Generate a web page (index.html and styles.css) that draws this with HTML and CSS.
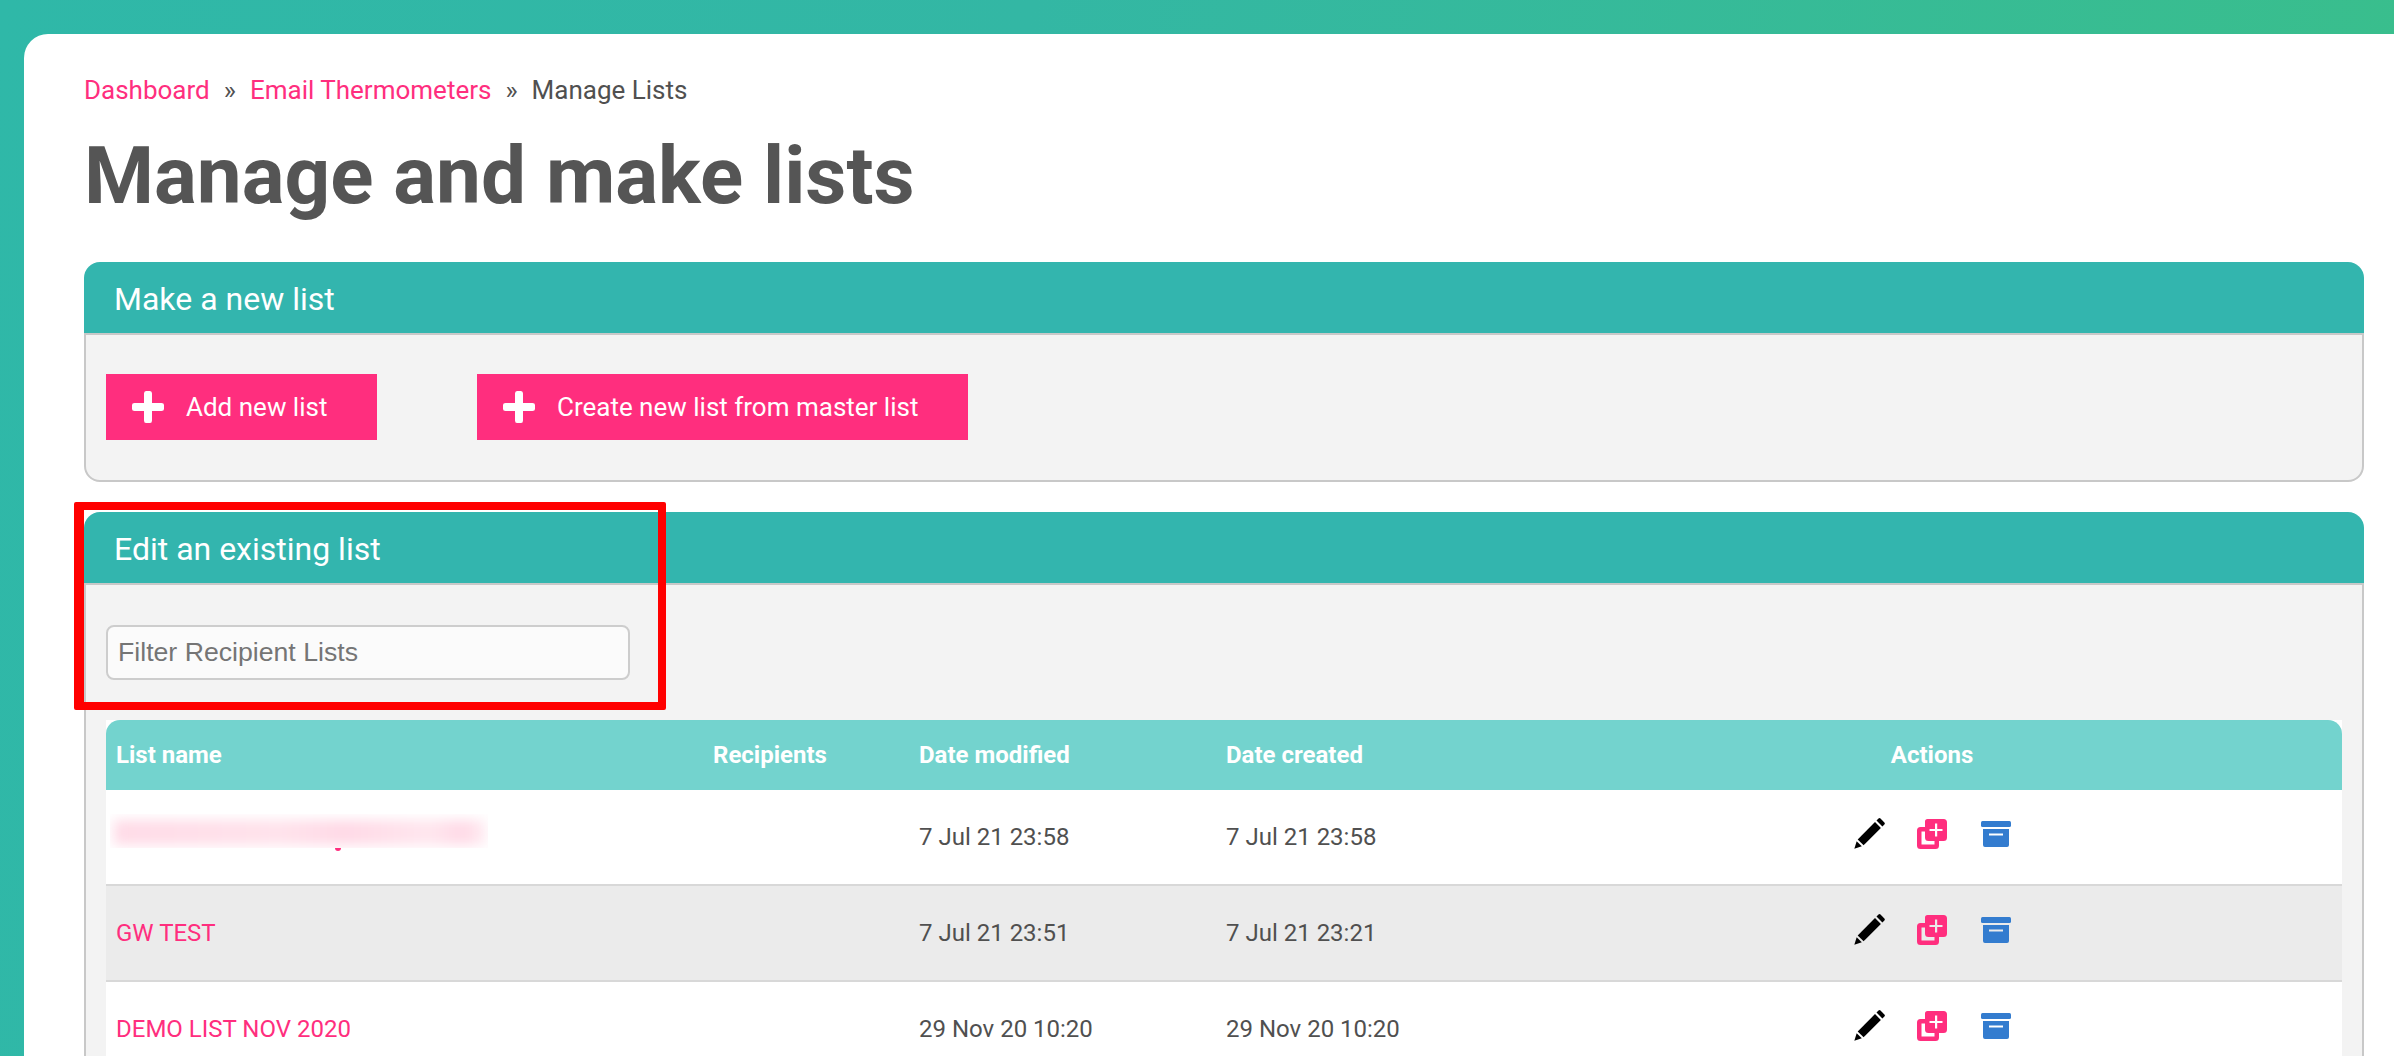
FILE: index.html
```html
<!DOCTYPE html>
<html lang="en">
<head>
<meta charset="utf-8">
<title>Manage and make lists</title>
<link rel="stylesheet" href="styles.css">
</head>
<body>
<svg class="defs" width="0" height="0" aria-hidden="true">
  <symbol id="i-pencil" viewBox="0 0 32 32">
    <path d="M24.5 1.6 Q25.5.6 26.5 1.6 L30.4 5.5 Q31.4 6.5 30.4 7.5 L28.4 9.5 L22.5 3.6Z"/>
    <path d="M21 5.1 L26.9 11 L9.6 28.3 L3.7 22.4Z"/>
    <path d="M2.7 24.2 L7.8 29.3 L.3 31.7Z"/>
  </symbol>
  <symbol id="i-dup" viewBox="0 0 30 30">
    <path fill-rule="evenodd" d="M10.500 0H26.500Q30 0 30 3.500V18.500Q30 22 26.500 22H11.500Q8 22 8 18.500V2.500Q8 0 10.500 0ZM18 4.500V9.900H12.500V12.100H18V17.500H20.200V12.100H25.500V9.900H20.200V4.500Z"/>
    <path d="M3.500 8H9V12.500H4.500V25.500H17.500V21H22V26.500Q22 30 18.500 30H3.500Q0 30 0 26.500V11.500Q0 8 3.500 8Z"/>
  </symbol>
  <symbol id="i-archive" viewBox="0 0 30 26">
    <rect x="0" y="0" width="30" height="6" rx="1.500"/>
    <path fill-rule="evenodd" d="M2 8H28V24Q28 26 26 26H4Q2 26 2 24ZM8 12.500V14.500H22V12.500Z"/>
  </symbol>
</svg>
<div class="card">
  <nav class="crumbs">
    <a href="#">Dashboard</a><span class="sep">»</span><a href="#">Email Thermometers</a><span class="sep">»</span><span>Manage Lists</span>
  </nav>
  <h1>Manage and make lists</h1>

  <section class="panel panel-make">
    <h2>Make a new list</h2>
    <div class="panel-body make-body">
      <a class="btn" href="#"><svg class="plus" viewBox="0 0 32 32"><path d="M12 2.500Q12 0 14 0H18Q20 0 20 2.500V12H29.500Q32 12 32 14V18Q32 20 29.500 20H20V29.500Q20 32 18 32H14Q12 32 12 29.500V20H2.500Q0 20 0 18V14Q0 12 2.500 12H12Z"/></svg>Add new list</a>
      <a class="btn" href="#"><svg class="plus" viewBox="0 0 32 32"><path d="M12 2.500Q12 0 14 0H18Q20 0 20 2.500V12H29.500Q32 12 32 14V18Q32 20 29.500 20H20V29.500Q20 32 18 32H14Q12 32 12 29.500V20H2.500Q0 20 0 18V14Q0 12 2.500 12H12Z"/></svg>Create new list from master list</a>
    </div>
  </section>

  <section class="panel panel-edit">
    <h2>Edit an existing list</h2>
    <div class="panel-body edit-body">
      <input class="filter" type="text" placeholder="Filter Recipient Lists">
      <table class="lists">
        <colgroup><col class="c1"><col class="c2"><col class="c3"><col class="c4"><col class="c5"></colgroup>
        <thead>
          <tr><th>List name</th><th>Recipients</th><th>Date modified</th><th>Date created</th><th class="center">Actions</th></tr>
        </thead>
        <tbody>
          <tr>
            <td><span class="smudge"><span class="smudge-fill"></span></span><span class="tail"></span></td><td></td><td>7 Jul 21 23:58</td><td>7 Jul 21 23:58</td>
            <td><div class="actions"><svg class="ic pencil"><use href="#i-pencil"/></svg><svg class="ic dup"><use href="#i-dup"/></svg><svg class="ic archive"><use href="#i-archive"/></svg></div></td>
          </tr>
          <tr>
            <td><a href="#">GW TEST</a></td><td></td><td>7 Jul 21 23:51</td><td>7 Jul 21 23:21</td>
            <td><div class="actions"><svg class="ic pencil"><use href="#i-pencil"/></svg><svg class="ic dup"><use href="#i-dup"/></svg><svg class="ic archive"><use href="#i-archive"/></svg></div></td>
          </tr>
          <tr>
            <td><a href="#">DEMO LIST NOV 2020</a></td><td></td><td>29 Nov 20 10:20</td><td>29 Nov 20 10:20</td>
            <td><div class="actions"><svg class="ic pencil"><use href="#i-pencil"/></svg><svg class="ic dup"><use href="#i-dup"/></svg><svg class="ic archive"><use href="#i-archive"/></svg></div></td>
          </tr>
        </tbody>
      </table>
    </div>
  </section>
  <div class="highlight"></div>
</div>
</body>
</html>
```
FILE: styles.css
```css
* { box-sizing: border-box; }
html, body { margin: 0; height: 1056px; overflow: hidden; }
body {
  background: linear-gradient(100deg, #2fb8a8 0%, #33b7a4 40%, #3abf8a 100%);
  padding: 34px 0 0 24px;
  font-family: Roboto, sans-serif;
  color: #505050;
}
.defs { position: absolute; }
a { color: #ff2e7e; text-decoration: none; }

.card {
  position: relative;
  background: #fff;
  border-radius: 24px 0 0 0;
  height: 1022px;
  overflow: hidden;
  padding: 42px 30px 0 60px;
}
.crumbs { font-size: 26px; line-height: 28px; display: flex; }
.sep { margin: 0 14px; }
h1 {
  margin: 24px 0 0;
  font-size: 80px;
  line-height: 96px;
  font-weight: 700;
  color: #555;
}
.panel { border-radius: 16px 16px 0 0; }
h2 {
  margin: 0;
  background: #33b5ae;
  color: #fff;
  font-size: 32px;
  font-weight: 400;
  border-radius: 16px 16px 0 0;
  padding: 2px 30px 0;
  display: flex;
  align-items: center;
}
.panel-body {
  background: #f3f3f3;
  border: 2px solid #c8c8c8;
}
.panel-make { margin-top: 38px; }
.panel-make h2 { height: 71px; }
.make-body {
  height: 149px;
  border-radius: 0 0 16px 16px;
  padding: 39px 20px 0;
  display: flex;
  gap: 100px;
  align-items: flex-start;
}
.btn {
  display: flex;
  align-items: center;
  height: 66px;
  background: #ff2e7e;
  color: #fff;
  font-size: 26px;
  padding: 0 49.500px 0 26px;
}
.plus { width: 32px; height: 32px; fill: #fff; margin-right: 22px; }

.panel-edit { margin-top: 30px; }
.panel-edit h2 { height: 71px; }
.edit-body {
  border-bottom: 0;
  padding: 40px 20px 0;
  height: 480px;
}
.filter {
  display: block;
  width: 524px;
  height: 55px;
  padding: 0 10px;
  border: 2px solid #cdcdcd;
  border-radius: 8px;
  background: #fbfbfb;
  font: 400 26.67px "Liberation Sans", Arial, sans-serif;
}
.filter::placeholder { color: #757575; opacity: 1; }

.lists {
  width: 2236px;
  margin-top: 40px;
  border-collapse: separate;
  border-spacing: 0;
  table-layout: fixed;
  background: #fff;
  font-size: 24px;
}
.c1 { width: 597px; }
.c2 { width: 206px; }
.c3 { width: 307px; }
.c4 { width: 306px; }
.c5 { width: 820px; }
th {
  height: 70px;
  background: #73d3ce;
  color: #fff;
  font-size: 24px;
  font-weight: 700;
  text-align: left;
  padding: 0 10px;
}
th:first-child { border-radius: 14px 0 0 0; }
th:last-child { border-radius: 0 14px 0 0; }
th.center { text-align: center; }
td {
  height: 96px;
  padding: 0 10px;
  border-bottom: 2px solid #d8d8d8;
  position: relative;
}
tbody tr:nth-child(even) td { background: #ebebeb; }
.actions {
  display: flex;
  justify-content: center;
  align-items: center;
  margin-top: -6px;
}
.ic { display: block; }
.pencil { width: 32px; height: 32px; fill: #000; margin-bottom: 3px; }
.dup { width: 30px; height: 30px; fill: #ff2e7e; margin-left: 31px; }
.archive { width: 30px; height: 26px; fill: #337ccf; margin-left: 34px; }

.smudge {
  position: absolute;
  left: 4px;
  top: 24px;
  width: 378px;
  height: 34px;
  overflow: hidden;
}
.smudge-fill {
  position: absolute;
  left: 4px;
  right: 2px;
  top: 6px;
  bottom: 3px;
  background: linear-gradient(90deg, #ffdbe7 0%, #ffe2eb 45%, #ffd9e6 62%, #ffe6ee 85%, #ffd9e6 94%, #ffeef3 100%);
  filter: blur(6px);
}
.tail {
  position: absolute;
  left: 229px;
  top: 58px;
  width: 6px;
  height: 3px;
  background: #ff2e7e;
  border-radius: 0 0 3px 3px;
}
.highlight {
  position: absolute;
  left: 50px;
  top: 468px;
  width: 592px;
  height: 208px;
  border: solid #ff0000;
  border-width: 8px 8px 8px 10px;
  border-radius: 2px;
  pointer-events: none;
}
```
